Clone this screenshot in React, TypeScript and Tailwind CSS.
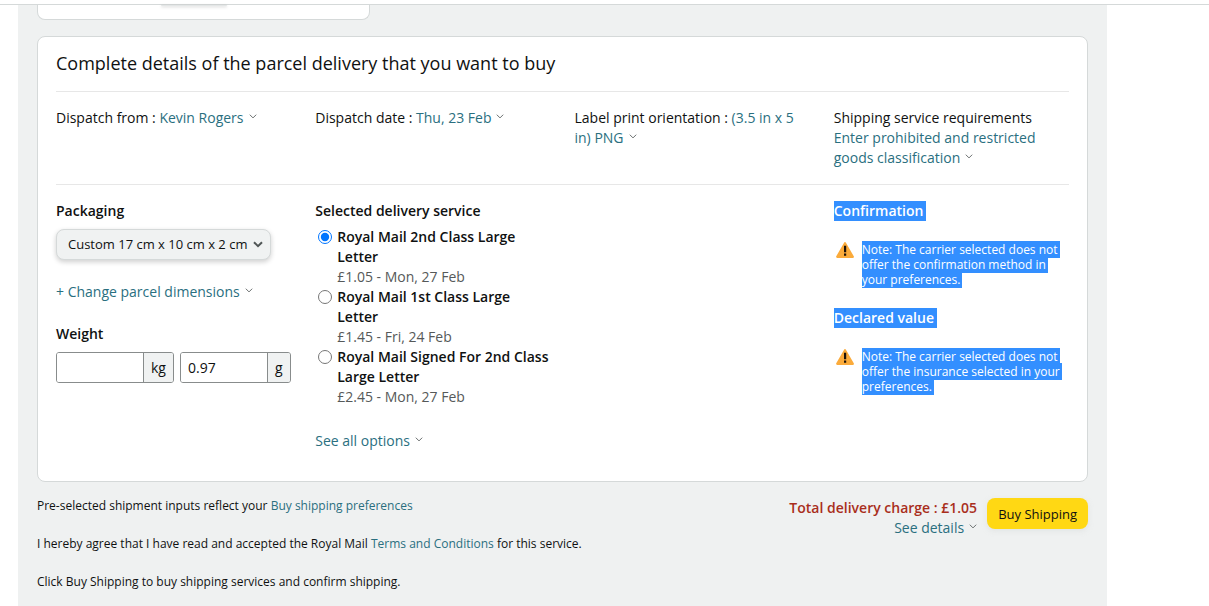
import { useState } from 'react'
import type { ReactNode } from 'react'

interface Service {
  id: string
  name: string
  detail: string
}

const services: Service[] = [
  { id: 'second', name: 'Royal Mail 2nd Class Large Letter', detail: '£1.05 - Mon, 27 Feb' },
  { id: 'first', name: 'Royal Mail 1st Class Large Letter', detail: '£1.45 - Fri, 24 Feb' },
  { id: 'signed', name: 'Royal Mail Signed For 2nd Class Large Letter', detail: '£2.45 - Mon, 27 Feb' },
]

function MenuLink({ children }: { children: ReactNode }) {
  return (
    <a href="#" className="text-[#2a6f7f] hover:underline">
      {children}
      <svg viewBox="0 0 8 5" className="mb-1 ml-[5px] inline h-[5px] w-2 align-baseline" fill="none" aria-hidden="true">
        <path d="M0.8 0.7L4 3.9L7.2 0.7" stroke="#6b7070" strokeWidth="1" />
      </svg>
    </a>
  )
}

function WarningIcon() {
  return (
    <svg viewBox="0 0 18 16" className="h-4 w-[18px] shrink-0" aria-hidden="true">
      <path d="M9 1.2L16.8 14.8H1.2Z" fill="#fbab3b" stroke="#fbab3b" strokeWidth="2.2" strokeLinejoin="round" />
      <path d="M8 3.8h2.2v6.4H8zM8 11.6h2.2v2.2H8z" fill="#1b1108" />
    </svg>
  )
}

function Notice({ title, children }: { title: string; children: ReactNode }) {
  return (
    <section className="flex flex-col items-start gap-[21px]">
      <h2 className="bg-[#338fff] pr-[3px] font-semibold text-white">{title}</h2>
      <div className="flex gap-2 pl-0.5">
        <WarningIcon />
        <p className="text-xs leading-[15px] text-white">
          <span className="bg-[#338fff] box-decoration-clone pr-0.5">{children}</span>
        </p>
      </div>
    </section>
  )
}

function WeightField({ unit, label, value }: { unit: string; label: string; value: string }) {
  return (
    <div className="flex h-[31px] overflow-hidden rounded-[3px] border border-[#888c8c]">
      <input aria-label={label} defaultValue={value} className="w-[86px] bg-white px-[7px] outline-none" />
      <span className="flex items-center border-l border-[#888c8c] bg-[#f0f2f2] px-[7px]">{unit}</span>
    </div>
  )
}

export default function App() {
  const [service, setService] = useState('second')

  return (
    <div className="min-h-screen bg-white font-['Open_Sans','Noto_Sans',sans-serif] text-sm leading-5 text-[#0f1111]">
      <div className="h-[5px] border-b border-[#d5d9d9]" />
      <main className="mr-[102px] ml-[18px] min-h-[601px] bg-[#eff1f1] px-[19px]">
        <div className="flex h-[15px] w-[333px] justify-center rounded-b-lg border border-t-0 border-[#d5d9d9] bg-white pr-5">
          <div className="h-px w-[66px] rounded-b-lg bg-[#e3e6e6] shadow-[0_1px_3px_rgba(15,17,17,0.25)]" />
        </div>

        <section className="mt-4 rounded-lg border border-[#d5d9d9] bg-white px-[18px] pb-[30px]">
          <h1 className="pt-3.5 pb-4 text-lg leading-6">
            Complete details of the parcel delivery that you want to buy
          </h1>
          <div className="grid grid-cols-4 gap-x-6 border-y border-[#e7e7e7] py-4">
            <p>
              Dispatch from : <MenuLink>Kevin Rogers</MenuLink>
            </p>
            <p>
              Dispatch date : <MenuLink>Thu, 23 Feb</MenuLink>
            </p>
            <p>
              Label print orientation : <MenuLink>(3.5 in x 5 in) PNG</MenuLink>
            </p>
            <p>
              Shipping service requirements
              <br />
              <MenuLink>Enter prohibited and restricted goods classification</MenuLink>
            </p>
          </div>

          <div className="grid grid-cols-4 gap-x-6 pt-4">
            <div>
              <label htmlFor="packaging" className="block font-semibold">
                Packaging
              </label>
              <div className="relative mt-2 w-[215px]">
                <select
                  id="packaging"
                  className="h-[31px] w-full appearance-none rounded-lg border border-[#d5d9d9] bg-[#f0f2f2] pr-5 pb-0.5 pl-[11px] text-[13px] shadow-[0_2px_5px_rgba(15,17,17,0.2)]"
                >
                  <option>Custom 17 cm x 10 cm x 2 cm</option>
                </select>
                <svg
                  viewBox="0 0 10 7"
                  className="pointer-events-none absolute top-3 right-2 h-[7px] w-2.5"
                  fill="none"
                  aria-hidden="true"
                >
                  <path d="M1 1.2L5 5.2L9 1.2" stroke="#4f5555" strokeWidth="2" />
                </svg>
              </div>
              <p className="mt-[22px]">
                <MenuLink>+ Change parcel dimensions</MenuLink>
              </p>
              <h2 className="mt-[22px] font-semibold">Weight</h2>
              <div className="mt-2 flex gap-1.5">
                <WeightField unit="kg" label="Kilograms" value="" />
                <WeightField unit="g" label="Grams" value="0.97" />
              </div>
            </div>

            <div>
              <fieldset>
                <legend className="font-semibold">Selected delivery service</legend>
                <div className="mt-1.5">
                  {services.map((s) => (
                    <label key={s.id} className="flex items-start gap-[5px] pl-[3px]">
                      <input
                        type="radio"
                        name="service"
                        checked={service === s.id}
                        onChange={() => setService(s.id)}
                        className="mt-[3px] h-3.5 w-3.5 shrink-0"
                      />
                      <span>
                        <span className="block font-semibold">{s.name}</span>
                        <span className="block text-[#565959]">{s.detail}</span>
                      </span>
                    </label>
                  ))}
                </div>
              </fieldset>
              <p className="mt-6">
                <MenuLink>See all options</MenuLink>
              </p>
            </div>

            <div className="col-start-4 flex flex-col gap-[21px]">
              <Notice title="Confirmation">
                Note: The carrier selected does not offer the confirmation method in your preferences.
              </Notice>
              <Notice title="Declared value">
                Note: The carrier selected does not offer the insurance selected in your preferences.
              </Notice>
            </div>
          </div>
        </section>

        <footer className="flex items-start justify-between pt-3.5">
          <div className="flex flex-col gap-[18px] text-xs leading-5">
            <p>
              Pre-selected shipment inputs reflect your{' '}
              <a href="#" className="text-[#2a6f7f]">
                Buy shipping preferences
              </a>
            </p>
            <p>
              I hereby agree that I have read and accepted the Royal Mail{' '}
              <a href="#" className="text-[#2a6f7f]">
                Terms and Conditions
              </a>{' '}
              for this service.
            </p>
            <p>Click Buy Shipping to buy shipping services and confirm shipping.</p>
          </div>
          <div className="flex gap-2.5 pt-0.5">
            <div className="text-right">
              <p className="font-semibold text-[#a92e1c]">Total delivery charge : £1.05</p>
              <MenuLink>See details</MenuLink>
            </div>
            <button
              type="button"
              className="h-[31px] rounded-lg bg-[#ffd814] px-[11px] text-[13px] shadow-[0_2px_5px_rgba(213,217,217,0.5)]"
            >
              Buy Shipping
            </button>
          </div>
        </footer>
      </main>
    </div>
  )
}
